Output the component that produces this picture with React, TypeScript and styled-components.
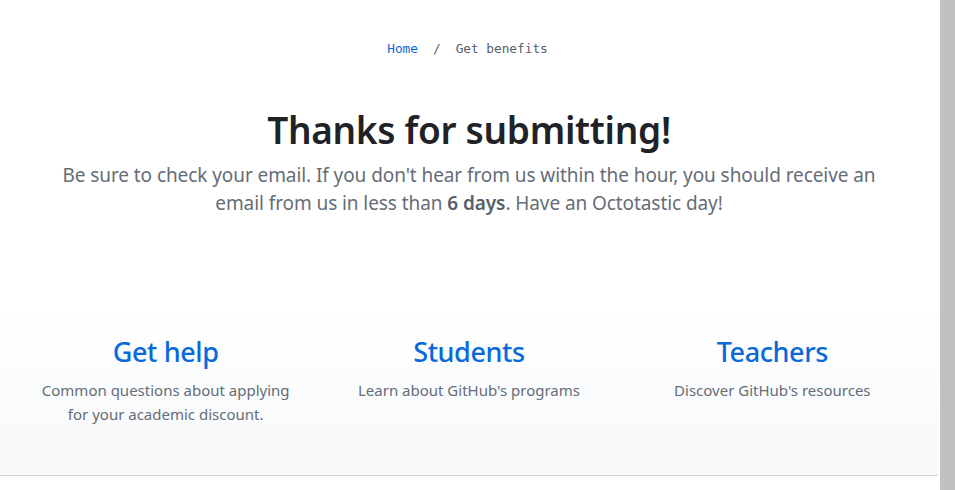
import React from "react";
import styled, { createGlobalStyle } from "styled-components";

const Global = createGlobalStyle`
  html, body { margin: 0; padding: 0; background: #ffffff; }
  body { font-family: "Noto Sans", "Open Sans", sans-serif; }
  * { box-sizing: border-box; }
`;

const Shell = styled.div`
  display: flex;
  width: 955px;
  height: 490px;
  overflow: hidden;
`;

const Main = styled.main`
  flex: 1;
  display: flex;
  flex-direction: column;
`;

const ScrollBar = styled.div`
  width: 17px;
  flex: none;
  background: #c1c1c1;
  border-left: 2px solid #ffffff;
`;

const Breadcrumb = styled.nav`
  display: flex;
  justify-content: center;
  gap: 15px;
  padding-top: 40px;
  padding-right: 3px;
  font-family: "DejaVu Sans Mono", "Liberation Mono", monospace;
  font-size: 12.75px;
  line-height: 18px;
  color: #57606a;
`;

const Crumb = styled.span<{ $link?: boolean }>`
  color: ${(p) => (p.$link ? "#0969da" : "#57606a")};
`;

const Hero = styled.section`
  display: flex;
  flex-direction: column;
  align-items: center;
  padding: 46px 40px 0;
  text-align: center;
`;

const Title = styled.h1`
  margin: 0;
  font-size: 37px;
  line-height: 52px;
  font-weight: 600;
  color: #1f2328;
  letter-spacing: -0.3px;
`;

const Lead = styled.p`
  margin: 5px 0 0;
  max-width: 830px;
  font-size: 19px;
  line-height: 28px;
  color: #656d76;
  letter-spacing: -0.08px;
  strong { font-weight: 600; color: #57606a; }
`;

const Links = styled.section`
  margin-top: 91px;
  display: grid;
  grid-template-columns: repeat(3, 1fr);
  padding: 24px 14px 49px 14px;
  background: linear-gradient(180deg, #ffffff 0%, #f6f8fa 100%);
  border-bottom: 1px solid #d0d7de;
`;

const Card = styled.div`
  display: flex;
  flex-direction: column;
  align-items: center;
  text-align: center;
  padding: 0 24px;
`;

const CardTitle = styled.a`
  font-size: 27px;
  line-height: 40px;
  font-weight: 500;
  color: #0969da;
  text-decoration: none;
  letter-spacing: -0.4px;
`;

const CardText = styled.p`
  margin: 6px 0 0;
  font-size: 15px;
  line-height: 24px;
  color: #656d76;
  max-width: 260px;
`;

const cards = [
  { title: "Get help", text: "Common questions about applying for your academic discount." },
  { title: "Students", text: "Learn about GitHub's programs" },
  { title: "Teachers", text: "Discover GitHub's resources" },
];

export default function App() {
  return (
    <>
      <Global />
      <Shell>
        <Main>
          <Breadcrumb>
            <Crumb $link>Home</Crumb>
            <Crumb>/</Crumb>
            <Crumb>Get benefits</Crumb>
          </Breadcrumb>
          <Hero>
            <Title>Thanks for submitting!</Title>
            <Lead>
              Be sure to check your email. If you don't hear from us within the hour, you should receive an
              email from us in less than <strong>6 days</strong>. Have an Octotastic day!
            </Lead>
          </Hero>
          <Links>
            {cards.map((c) => (
              <Card key={c.title}>
                <CardTitle href="#">{c.title}</CardTitle>
                <CardText>{c.text}</CardText>
              </Card>
            ))}
          </Links>
        </Main>
        <ScrollBar />
      </Shell>
    </>
  );
}
